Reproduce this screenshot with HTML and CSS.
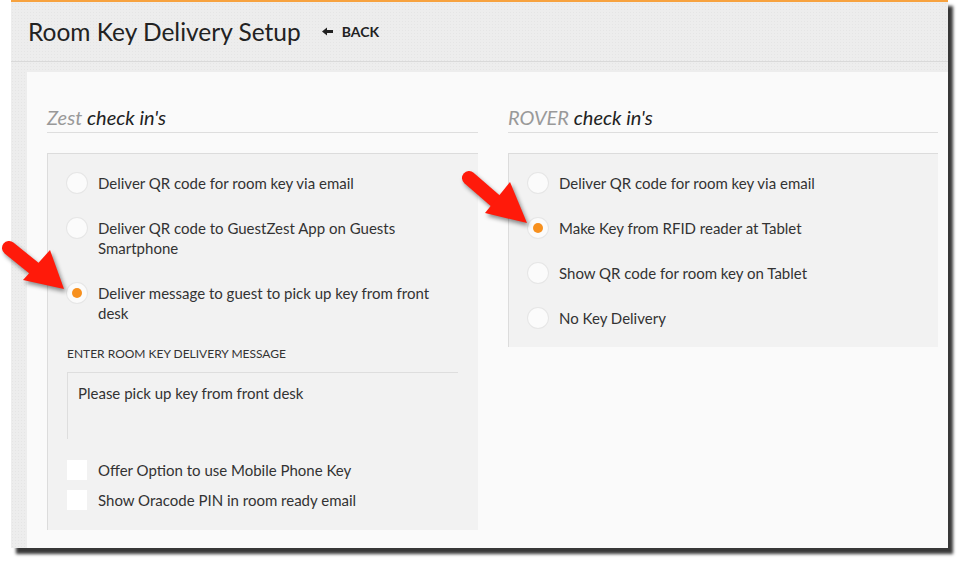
FILE: index.html
```html
<!DOCTYPE html>
<html lang="en">
<head>
    <meta charset="UTF-8">
    <title>Room Key Delivery Setup</title>
    <link rel="stylesheet" href="styles.css">
</head>
<body>
    <div class="frame">
        <div class="header">
            <h1>Room Key Delivery Setup</h1>
            <a class="back" href="#">
                <svg width="11" height="9" viewBox="0 0 11 9"><path d="M0 4.5 L5 0.5 L5 3 L11 3 L11 6 L5 6 L5 8.5 Z" fill="#222"/></svg>
                BACK
            </a>
        </div>

        <div class="panel">
            <div class="columns">
                <!-- Zest -->
                <div class="column">
                    <h2><span class="brand">Zest</span> check in's</h2>
                    <div class="box">
                        <div class="option">
                            <span class="radio"></span>
                            <span class="label">Deliver QR code for room key via email</span>
                        </div>
                        <div class="option">
                            <span class="radio"></span>
                            <span class="label">Deliver QR code to GuestZest App on Guests Smartphone</span>
                        </div>
                        <div class="option">
                            <span class="radio checked"></span>
                            <span class="label">Deliver message to guest to pick up key from front desk</span>
                        </div>

                        <div class="field-label">Enter room key delivery message</div>
                        <div class="textarea">Please pick up key from front desk</div>

                        <div class="checks">
                            <div class="option">
                                <span class="checkbox"></span>
                                <span class="label">Offer Option to use Mobile Phone Key</span>
                            </div>
                            <div class="option">
                                <span class="checkbox"></span>
                                <span class="label">Show Oracode PIN in room ready email</span>
                            </div>
                        </div>
                    </div>
                </div>

                <!-- Rover -->
                <div class="column">
                    <h2><span class="brand">ROVER</span> check in's</h2>
                    <div class="box">
                        <div class="option">
                            <span class="radio"></span>
                            <span class="label">Deliver QR code for room key via email</span>
                        </div>
                        <div class="option">
                            <span class="radio checked"></span>
                            <span class="label">Make Key from RFID reader at Tablet</span>
                        </div>
                        <div class="option">
                            <span class="radio"></span>
                            <span class="label">Show QR code for room key on Tablet</span>
                        </div>
                        <div class="option">
                            <span class="radio"></span>
                            <span class="label">No Key Delivery</span>
                        </div>
                    </div>
                </div>
            </div>
        </div>
    </div>

    <!-- callout arrows -->
    <svg class="callout callout-left" width="72" height="62" viewBox="0 0 72 62">
        <line x1="9" y1="13" x2="40" y2="38" stroke="#ff1a0a" stroke-width="14" stroke-linecap="round"/>
        <polygon points="50,15 23,45 64,54" fill="#ff1a0a"/>
    </svg>
    <svg class="callout callout-right" width="72" height="62" viewBox="0 0 72 62">
        <line x1="12" y1="12" x2="42" y2="38" stroke="#ff1a0a" stroke-width="14" stroke-linecap="round"/>
        <polygon points="53,16 28,47 70,57" fill="#ff1a0a"/>
    </svg>
</body>
</html>
```

FILE: styles.css
```css
* {
    margin: 0;
    padding: 0;
    box-sizing: border-box;
}

body {
    background: #fff;
    font-family: 'Lato', 'Open Sans', sans-serif;
    color: #333;
    position: relative;
    width: 958px;
    height: 561px;
    overflow: hidden;
}

.frame {
    margin-left: 11px;
    width: 937px;
    height: 548px;
    border-top: 2px solid #f7a23f;
    background-color: #ededed;
    background-image: radial-gradient(rgba(0, 0, 0, 0.035) 1px, transparent 1px);
    background-size: 3px 3px;
    box-shadow: 5px 6px 3px rgba(0, 0, 0, 0.78);
    display: flex;
    flex-direction: column;
}

.header {
    height: 60px;
    border-bottom: 1px solid #d9d9d9;
    display: flex;
    align-items: center;
    padding-left: 17px;
    padding-bottom: 1px;
}

h1 {
    font-size: 24.5px;
    font-weight: 400;
    color: #222;
    margin-right: 21px;
}

.back {
    display: flex;
    align-items: center;
    gap: 9px;
    font-size: 14px;
    font-weight: 700;
    color: #222;
    text-decoration: none;
    margin-top: 1px;
}

.panel {
    flex: 1;
    margin: 10px 0 0 16px;
    background: #fafafa;
    padding: 33px 10px 0 20px;
}

.columns {
    display: grid;
    grid-template-columns: 431px 430px;
    gap: 30px;
}

h2 {
    font-size: 20px;
    line-height: 24px;
    font-weight: 400;
    font-style: italic;
    color: #222;
    padding-bottom: 3px;
    border-bottom: 1px solid #dedede;
}

.brand {
    color: #999;
}

.box {
    margin-top: 20px;
    background: #f2f2f2;
    border-top: 1px solid #dcdcdc;
    border-left: 1px solid #dcdcdc;
    padding: 19px 20px 19px 19px;
    display: flex;
    flex-direction: column;
    gap: 25px;
}

.column:first-child .box {
    padding-bottom: 20px;
    gap: 0;
}

.column:first-child .box > .option + .option {
    margin-top: 25px;
}

.option {
    display: flex;
    align-items: flex-start;
    gap: 11px;
    font-size: 15px;
    line-height: 20px;
    color: #333;
}

.option .label {
    padding-right: 20px;
}

.radio {
    flex: none;
    width: 20px;
    height: 20px;
    border-radius: 50%;
    background: #fbfbfb;
    box-shadow: 0 0 0 1px #e6e6e6;
    display: flex;
    align-items: center;
    justify-content: center;
}

.radio.checked::after {
    content: '';
    width: 10px;
    height: 10px;
    border-radius: 50%;
    background: #f7901e;
}

.field-label {
    margin-top: 23px;
    font-size: 12px;
    line-height: 16px;
    text-transform: uppercase;
    color: #333;
}

.textarea {
    margin-top: 10px;
    height: 67px;
    border-top: 1px solid #dedede;
    border-left: 1px solid #dedede;
    padding: 10px 10px;
    font-size: 15px;
    line-height: 20px;
    color: #333;
}

.checks {
    margin-top: 21px;
    display: flex;
    flex-direction: column;
    gap: 10px;
}

.checkbox {
    flex: none;
    width: 20px;
    height: 20px;
    background: #fff;
}

.callout {
    position: absolute;
    filter: drop-shadow(2px 3px 2px rgba(0, 0, 0, 0.45));
}

.callout-left {
    left: 0;
    top: 235px;
}

.callout-right {
    left: 457px;
    top: 166px;
}
```
